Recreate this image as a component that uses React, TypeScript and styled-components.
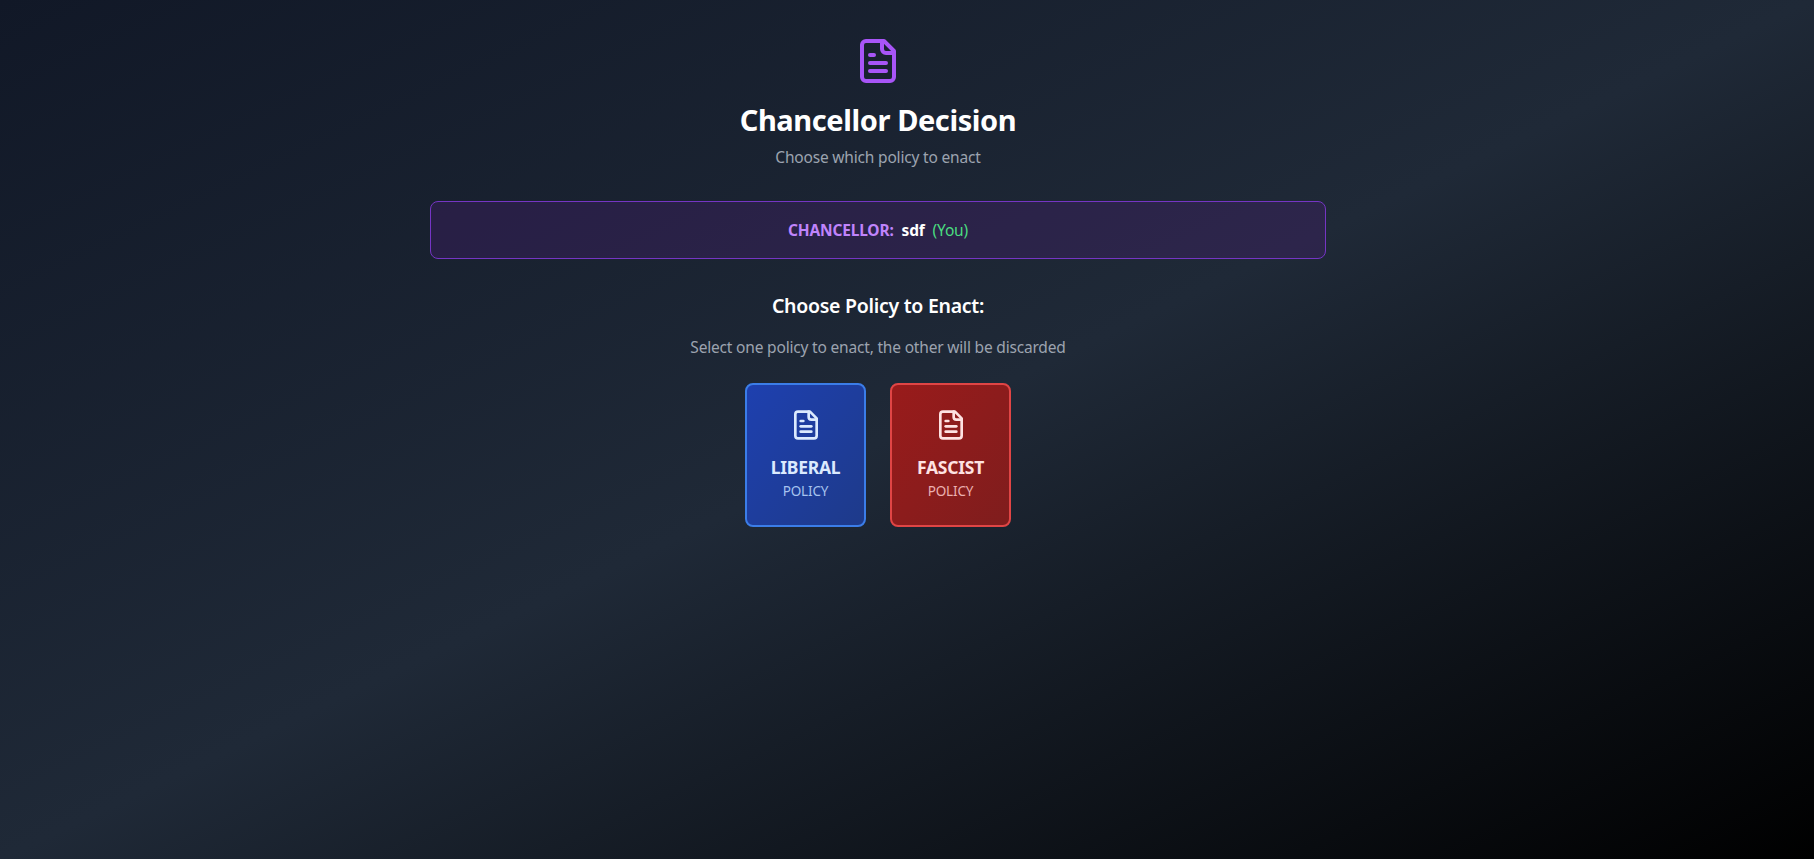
import React from 'react';
import styled, { createGlobalStyle } from 'styled-components';

const GlobalStyle = createGlobalStyle`
  * {
    box-sizing: border-box;
  }

  html, body {
    margin: 0;
    padding: 0;
  }

  body {
    font-family: "Noto Sans", "Open Sans", sans-serif;
    background: #111827;
  }
`;

const Page = styled.div`
  min-height: 859px;
  padding: 37px 58px 0 0;
  background: linear-gradient(to bottom right, #111827, #1f2937, #000000);
`;

const Content = styled.main`
  display: flex;
  flex-direction: column;
  align-items: center;
  width: 896px;
  margin: 0 auto;
`;

const Header = styled.header`
  display: flex;
  flex-direction: column;
  align-items: center;
  margin-bottom: 32px;
`;

const Title = styled.h1`
  margin: 17px 0 7px;
  font-size: 29px;
  line-height: 36px;
  font-weight: 700;
  letter-spacing: -0.014em;
  color: #ffffff;
`;

const Subtitle = styled.p`
  margin: 0;
  font-size: 15.5px;
  line-height: 24px;
  letter-spacing: -0.012em;
  color: #9ca3af;
`;

const ChancellorPanel = styled.div`
  display: flex;
  justify-content: center;
  gap: 8px;
  width: 100%;
  padding: 16px;
  margin-bottom: 33px;
  font-size: 15.5px;
  line-height: 24px;
  letter-spacing: -0.012em;
  background: rgba(88, 28, 135, 0.25);
  border: 1px solid #7535c4;
  border-radius: 8px;
`;

const RoleLabel = styled.span`
  font-weight: 700;
  color: #c084fc;
`;

const PlayerName = styled.span`
  font-weight: 700;
  color: #ffffff;
`;

const YouTag = styled.span`
  color: #4ade80;
`;

const SectionTitle = styled.h2`
  margin: 0 0 15px;
  font-size: 19.5px;
  line-height: 28px;
  font-weight: 600;
  letter-spacing: -0.014em;
  color: #ffffff;
`;

const Hint = styled.p`
  margin: 0 0 24px;
  font-size: 15.5px;
  line-height: 24px;
  letter-spacing: -0.012em;
  color: #9ca3af;
`;

const PolicyRow = styled.div`
  display: flex;
  justify-content: center;
  gap: 24px;
`;

const PolicyCard = styled.button<{ $tone: 'liberal' | 'fascist' }>`
  display: flex;
  flex-direction: column;
  align-items: center;
  justify-content: center;
  width: 121px;
  height: 144px;
  padding: 0;
  font-family: inherit;
  cursor: pointer;
  border-radius: 8px;
  border: 2px solid ${(p) => (p.$tone === 'liberal' ? '#3b7de8' : '#e04545')};
  background: ${(p) =>
    p.$tone === 'liberal'
      ? 'linear-gradient(to bottom right, #1e40af, #1e3a8a)'
      : 'linear-gradient(to bottom right, #991b1b, #7f1d1d)'};
  color: ${(p) => (p.$tone === 'liberal' ? '#dbeafe' : '#fee2e2')};
`;

const CardIcon = styled.span`
  display: flex;
  margin-bottom: 12px;
`;

const PolicyName = styled.span`
  font-size: 17.5px;
  line-height: 28px;
  font-weight: 700;
  letter-spacing: -0.014em;
`;

const PolicyKind = styled.span<{ $tone: 'liberal' | 'fascist' }>`
  font-size: 13.5px;
  line-height: 20px;
  letter-spacing: -0.012em;
  color: ${(p) => (p.$tone === 'liberal' ? '#bfdbfe' : '#fecaca')};
  opacity: 0.85;
`;

const DocumentIcon = ({ size, color }: { size: number; color: string }) => (
  <svg
    width={size}
    height={size}
    viewBox="0 0 24 24"
    fill="none"
    stroke={color}
    strokeWidth={2}
    strokeLinecap="round"
    strokeLinejoin="round"
    style={{ display: 'block' }}
  >
    <path d="M15 2H6a2 2 0 0 0-2 2v16a2 2 0 0 0 2 2h12a2 2 0 0 0 2-2V7Z" />
    <path d="M14 2v4a2 2 0 0 0 2 2h4" />
    <path d="M10 9H8" />
    <path d="M16 13H8" />
    <path d="M16 17H8" />
  </svg>
);

const App: React.FC = () => (
  <>
    <GlobalStyle />
    <Page>
      <Content>
        <Header>
          <DocumentIcon size={48} color="#a855f7" />
          <Title>Chancellor Decision</Title>
          <Subtitle>Choose which policy to enact</Subtitle>
        </Header>
        <ChancellorPanel>
          <RoleLabel>CHANCELLOR:</RoleLabel>
          <PlayerName>sdf</PlayerName>
          <YouTag>(You)</YouTag>
        </ChancellorPanel>
        <SectionTitle>Choose Policy to Enact:</SectionTitle>
        <Hint>Select one policy to enact, the other will be discarded</Hint>
        <PolicyRow>
          <PolicyCard $tone="liberal">
            <CardIcon>
              <DocumentIcon size={32} color="#dbeafe" />
            </CardIcon>
            <PolicyName>LIBERAL</PolicyName>
            <PolicyKind $tone="liberal">POLICY</PolicyKind>
          </PolicyCard>
          <PolicyCard $tone="fascist">
            <CardIcon>
              <DocumentIcon size={32} color="#fee2e2" />
            </CardIcon>
            <PolicyName>FASCIST</PolicyName>
            <PolicyKind $tone="fascist">POLICY</PolicyKind>
          </PolicyCard>
        </PolicyRow>
      </Content>
    </Page>
  </>
);

export default App;
